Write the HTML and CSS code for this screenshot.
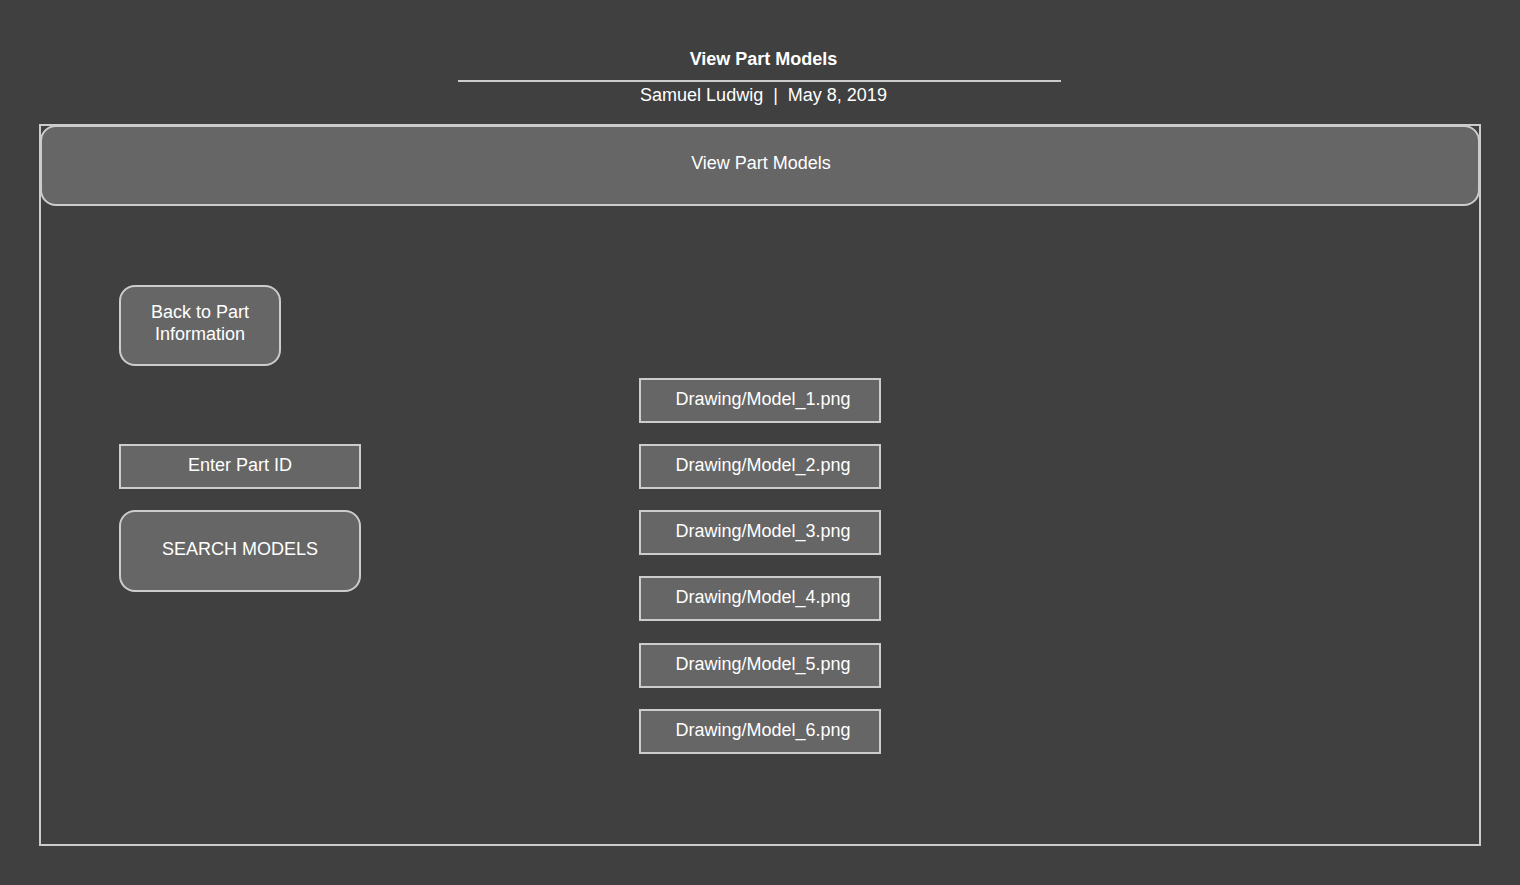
FILE: index.html
```html
<!DOCTYPE html>
<html lang="en">
<head>
<meta charset="utf-8">
<title>View Part Models</title>
<link rel="stylesheet" href="styles.css">
</head>
<body>
<header class="doc-head">
  <div class="doc-title">View Part Models</div>
  <div class="doc-sub">Samuel Ludwig &nbsp;|&nbsp; May 8, 2019</div>
</header>
<main class="frame">
  <div class="banner">View Part Models</div>
  <div class="content">
    <div class="left-col">
      <div class="btn btn-back">Back to Part<br>Information</div>
      <div class="field">Enter Part ID</div>
      <div class="btn btn-search">SEARCH MODELS</div>
    </div>
    <div class="file-list">
      <div class="file">Drawing/Model_1.png</div>
      <div class="file">Drawing/Model_2.png</div>
      <div class="file">Drawing/Model_3.png</div>
      <div class="file">Drawing/Model_4.png</div>
      <div class="file file-lower">Drawing/Model_5.png</div>
      <div class="file">Drawing/Model_6.png</div>
    </div>
  </div>
</main>
</body>
</html>
```

FILE: styles.css
```css
* { box-sizing: border-box; }

html, body {
  margin: 0;
  padding: 0;
  background: #404040;
  color: #ffffff;
  font-family: "Liberation Sans", Arial, sans-serif;
  font-size: 18px;
}

body {
  width: 1520px;
  height: 885px;
  overflow: hidden;
}

.doc-head {
  width: 603px;
  margin: 0 0 0 458px;
  padding-top: 48px;
  display: flex;
  flex-direction: column;
  align-items: center;
}

.doc-title {
  width: 100%;
  text-align: center;
  font-weight: bold;
  line-height: 22px;
  padding: 0 0 10px 8px;
  border-bottom: 2px solid #cccccc;
}

.doc-sub {
  width: 100%;
  text-align: center;
  line-height: 22px;
  margin-top: 2px;
  padding-left: 8px;
}

.frame {
  margin: 18px 0 0 39px;
  width: 1442px;
  height: 722px;
  border: 2px solid #cccccc;
}

.banner {
  margin: -1px -1px 0 -1px;
  height: 81px;
  background: #666666;
  border: 2px solid #cccccc;
  border-radius: 16px;
  display: flex;
  align-items: center;
  justify-content: center;
  padding: 0 0 5px 2px;
  line-height: 22px;
}

.content {
  display: flex;
  padding-left: 78px;
}

.left-col {
  width: 242px;
  display: flex;
  flex-direction: column;
  padding-top: 79px;
}

.btn, .field, .file {
  background: #666666;
  border: 2px solid #cccccc;
  display: flex;
  align-items: center;
  justify-content: center;
  text-align: center;
  line-height: 22px;
  padding-bottom: 4px;
}

.btn { border-radius: 16px; }

.btn-back {
  width: 162px;
  height: 81px;
  padding-bottom: 6px;
}

.field {
  margin-top: 78px;
  width: 242px;
  height: 45px;
}

.btn-search {
  margin-top: 21px;
  width: 242px;
  height: 82px;
}

.file-list {
  margin-left: 278px;
  padding-top: 172px;
  display: flex;
  flex-direction: column;
  gap: 21px;
}

.file {
  width: 242px;
  height: 45px;
  padding-left: 6px;
}

.file-lower {
  margin-top: 1px;
}
```
